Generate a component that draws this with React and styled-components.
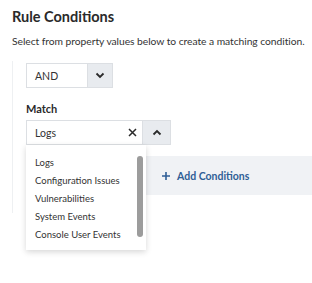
import React from 'react'
import styled, { createGlobalStyle } from 'styled-components'

const GlobalStyle = createGlobalStyle`
  html, body {
    margin: 0;
    padding: 0;
    background: #ffffff;
  }
  body {
    font-family: 'Lato', 'Open Sans', sans-serif;
    color: #2b2b2b;
  }
`

export const Page = styled.div`
  width: 312px;
  height: 283px;
  box-sizing: border-box;
  padding: 6px 0 0 12px;
  overflow: hidden;
`

export const Title = styled.h2`
  margin: 0;
  font-size: 14.5px;
  line-height: 22px;
  font-weight: 700;
  color: #2a2a2a;
`

export const Subtitle = styled.p`
  margin: 6px 0 0;
  font-size: 10.3px;
  letter-spacing: -0.05px;
  line-height: 14px;
  white-space: nowrap;
  color: #333;
`

export const Section = styled.div`
  margin-top: 13px;
  border-left: 1px solid #eef0f2;
  padding: 2px 0 18px 13px;
  position: relative;
`

export const Select = styled.div`
  display: flex;
  width: ${p => p.width}px;
  height: 25px;
  box-sizing: border-box;
  border: 1px solid #dcdfe3;
  background: #fff;
  position: relative;
`

export const Value = styled.div`
  flex: 1;
  display: flex;
  align-items: center;
  padding-left: 8px;
  font-size: 10.5px;
  color: #333;
`

export const Clear = styled.div`
  width: 20px;
  display: flex;
  align-items: center;
  justify-content: center;
`

export const Toggle = styled.div`
  width: ${p => p.width}px;
  display: flex;
  align-items: center;
  justify-content: center;
  background: #e8ebef;
  border-left: 1px solid #dcdfe3;
`

export const Label = styled.div`
  margin: 14px 0 5px;
  font-size: 11px;
  font-weight: 700;
  color: #2a2a2a;
`

export const Menu = styled.div`
  position: absolute;
  top: 24px;
  left: -1px;
  width: 120px;
  height: 105px;
  box-sizing: border-box;
  background: #fff;
  box-shadow: 0 2px 6px rgba(0, 0, 0, 0.16);
  padding: 9px 0 0 9px;
  z-index: 2;
`

export const Item = styled.div`
  font-size: 9.5px;
  line-height: 18px;
  color: #333;
`

export const Scrollbar = styled.div`
  position: absolute;
  top: 11px;
  right: 3px;
  width: 6px;
  height: 81px;
  border-radius: 3px;
  background: #9c9c9c;
`

export const AddBand = styled.div`
  margin-top: 11px;
  margin-right: -1px;
  height: 39px;
  background: #f0f2f5;
  display: flex;
  align-items: center;
  padding-left: 136px;
  gap: 7px;
  font-size: 10.5px;
  font-weight: 700;
  color: #2f5e96;
`

const Chevron = ({ up }) => (
  <svg width="10" height="7" viewBox="0 0 10 7">
    <path
      d={up ? 'M1.5 5.5 L5 2 L8.5 5.5' : 'M1.5 1.5 L5 5 L8.5 1.5'}
      fill="none"
      stroke="#2a2a2a"
      strokeWidth="1.8"
    />
  </svg>
)

const Cross = () => (
  <svg width="9" height="9" viewBox="0 0 9 9">
    <path d="M1 1 L8 8 M8 1 L1 8" stroke="#2a2a2a" strokeWidth="1.5" />
  </svg>
)

const Plus = () => (
  <svg width="8" height="8" viewBox="0 0 8 8">
    <path d="M4 0 V8 M0 4 H8" stroke="#2f5e96" strokeWidth="1.6" />
  </svg>
)

const options = ['Logs', 'Configuration Issues', 'Vulnerabilities', 'System Events', 'Console User Events']

export default function App() {
  return (
    <Page>
      <GlobalStyle />
      <Title>Rule Conditions</Title>
      <Subtitle>Select from property values below to create a matching condition.</Subtitle>
      <Section>
        <Select width={87}>
          <Value>AND</Value>
          <Toggle width={24}><Chevron /></Toggle>
        </Select>
        <Label>Match</Label>
        <Select width={145}>
          <Value>Logs</Value>
          <Clear><Cross /></Clear>
          <Toggle width={27}><Chevron up /></Toggle>
          <Menu>
            {options.map(o => <Item key={o}>{o}</Item>)}
            <Scrollbar />
          </Menu>
        </Select>
        <AddBand><Plus />Add Conditions</AddBand>
      </Section>
    </Page>
  )
}
